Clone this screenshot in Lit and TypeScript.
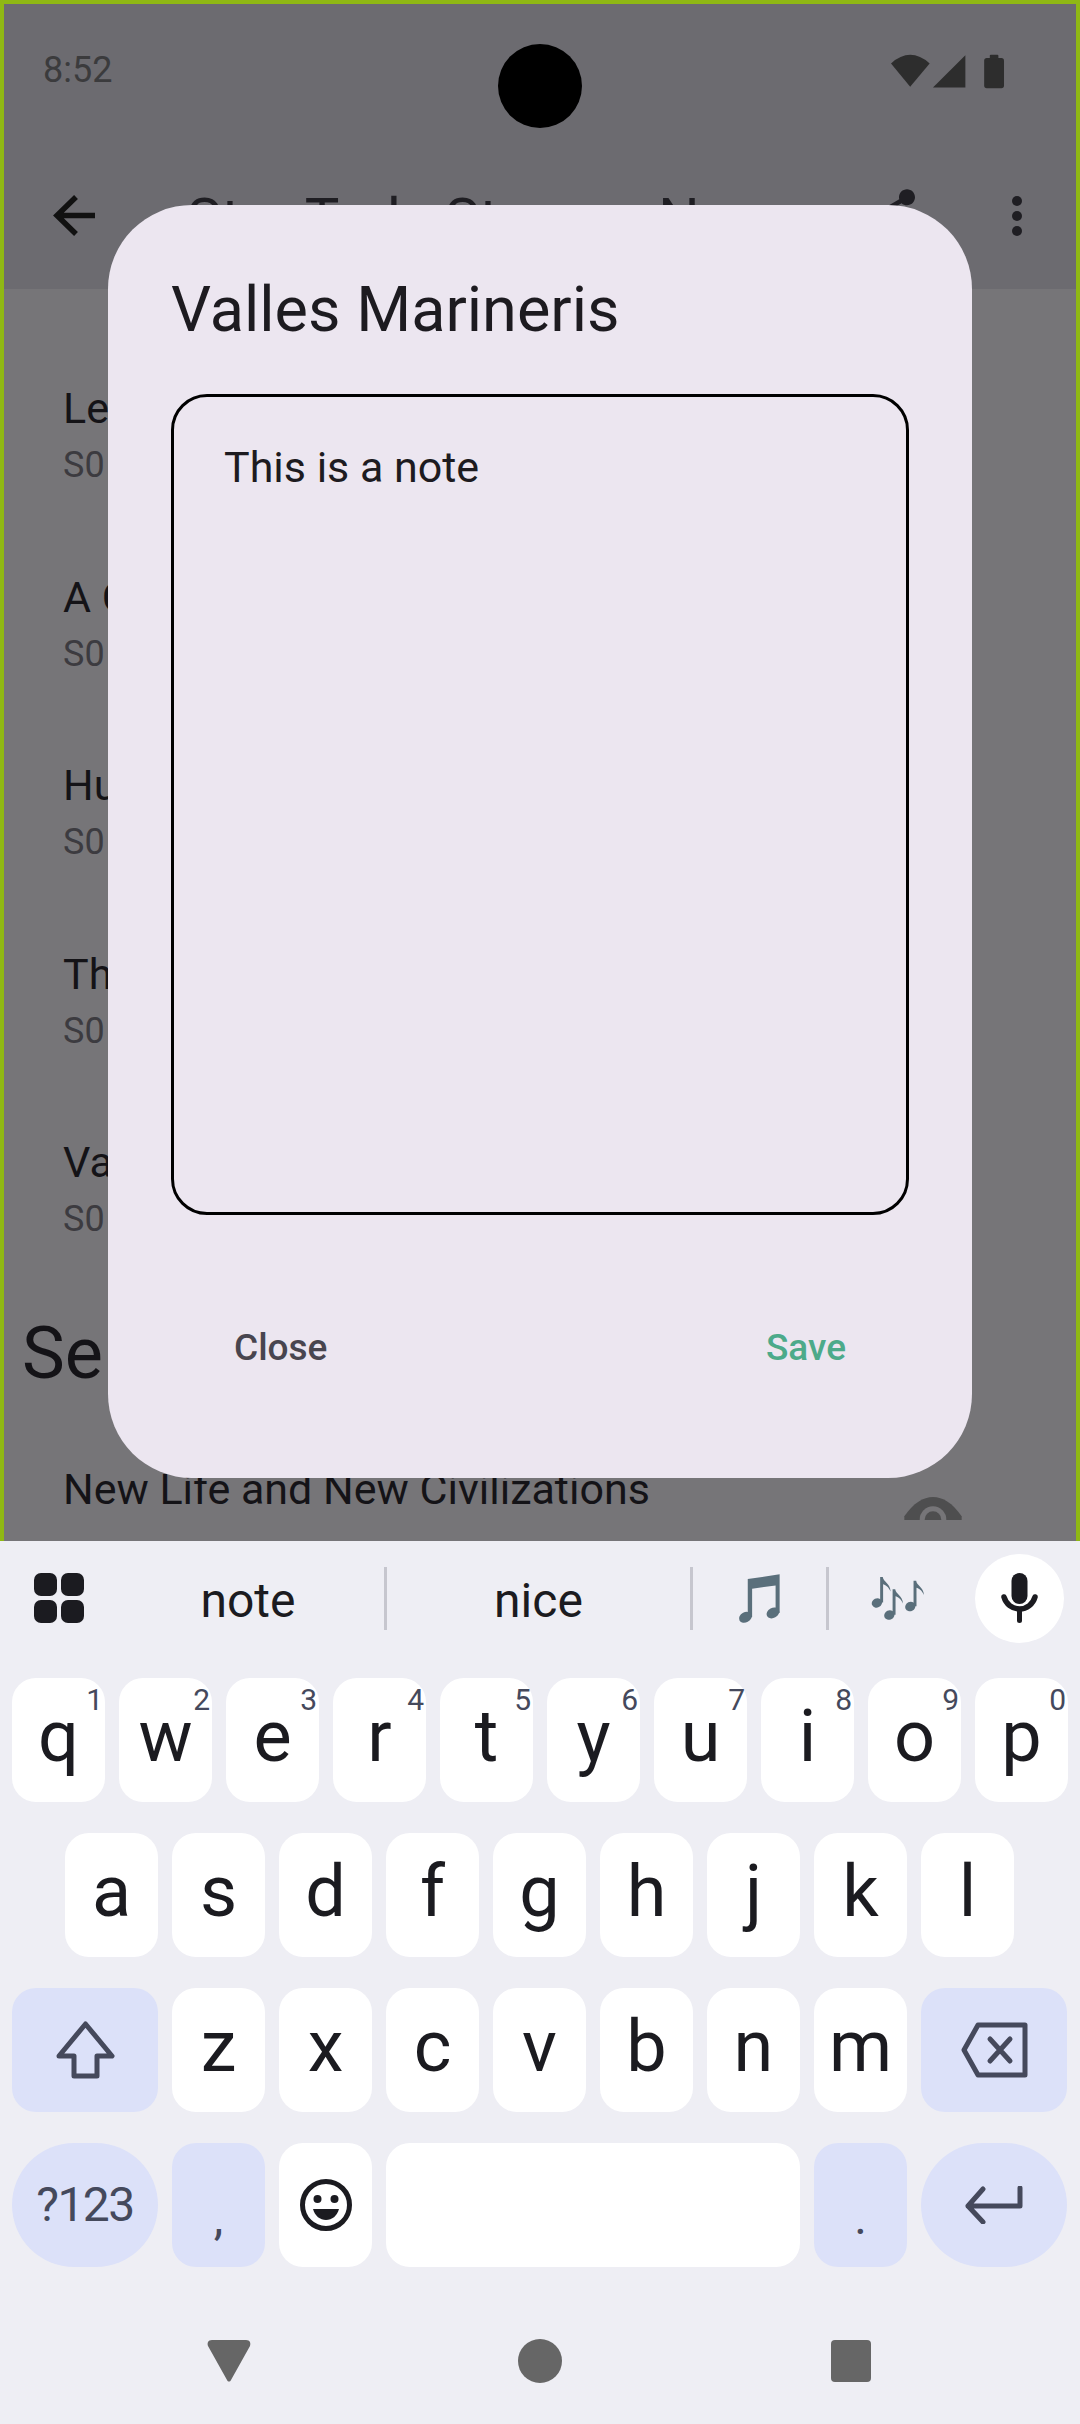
import {LitElement, html, css, svg} from 'lit';
import {customElement} from 'lit/decorators.js';

const ROW_1 = [['q', '1'], ['w', '2'], ['e', '3'], ['r', '4'], ['t', '5'], ['y', '6'], ['u', '7'], ['i', '8'], ['o', '9'], ['p', '0']];
const ROW_2 = ['a', 's', 'd', 'f', 'g', 'h', 'j', 'k', 'l'];
const ROW_3 = ['z', 'x', 'c', 'v', 'b', 'n', 'm'];

/** The on-screen keyboard with its suggestion strip and the navigation bar. */
@customElement('soft-keyboard')
export class SoftKeyboard extends LitElement {
    static override styles = css`
        :host {
            display: block;
            height: 883px;
            background: #eeeef4;
            font-family: Roboto, sans-serif;
            color: #1b1b20;
        }

        .strip {
            display: flex;
            align-items: center;
            height: 114px;
            margin-bottom: 23px;
        }
        .apps {
            width: 110px;
            display: flex;
            padding-left: 34px;
            box-sizing: border-box;
        }
        .word {
            text-align: center;
            font-size: 48px;
            line-height: 56px;
            padding-top: 6px;
        }
        .word.first {
            width: 274px;
            box-sizing: border-box;
            padding-left: 2px;
        }
        .word.second { width: 303px; }
        .divider {
            width: 3px;
            height: 63px;
            background: #c6c6ce;
        }
        .emoji {
            display: flex;
            justify-content: center;
            align-items: center;
        }
        .emoji.one { width: 133px; }
        .emoji.many { width: 138px; }
        .mic {
            width: 89px;
            height: 89px;
            margin-left: 8px;
            border-radius: 50%;
            background: #fff;
            display: flex;
            justify-content: center;
            align-items: center;
        }

        .keys {
            display: flex;
            flex-direction: column;
            gap: 31px;
        }
        .row {
            display: flex;
            gap: 14px;
            padding-left: 12px;
        }
        .row.home-row { padding-left: 65px; }
        .key {
            position: relative;
            width: 93px;
            height: 124px;
            box-sizing: border-box;
            padding-bottom: 7px;
            border-radius: 24px;
            background: #fff;
            display: flex;
            justify-content: center;
            align-items: center;
            font-size: 72px;
            line-height: 84px;
        }
        .key.wide { width: 146px; }
        .key.space { width: 414px; }
        .key.mod {
            background: #dce1f9;
            color: #45495c;
        }
        .key.pill { border-radius: 62px; }
        .key.icon { padding-bottom: 0; }
        .key.symbols {
            font-size: 48px;
            padding-bottom: 0;
            letter-spacing: -1.500px;
        }
        .key.mark {
            font-size: 48px;
            padding: 26px 0 0;
        }
        .hint {
            position: absolute;
            top: 4px;
            right: 2px;
            font-size: 30px;
            line-height: 36px;
            color: #45495c;
        }

        .nav {
            display: flex;
            align-items: center;
            height: 126px;
            padding-top: 31px;
        }
        .nav svg { display: block; }
        .nav .back { margin-left: 207px; }
        .nav .home { margin-left: 267px; }
        .nav .recent { margin-left: 269px; }
    `;

    private _key(label: string, hint?: string) {
        return html`<div class="key">${label}${hint ? html`<span class="hint">${hint}</span>` : ''}</div>`;
    }

    override render() {
        return html`
            <div class="strip">
                <div class="apps">
                    <svg width="50" height="50" viewBox="0 0 50 50" fill="#1b1b20">
                        <rect width="23" height="23" rx="7" />
                        <rect x="27" width="23" height="23" rx="7" />
                        <rect y="27" width="23" height="23" rx="7" />
                        <rect x="27" y="27" width="23" height="23" rx="7" />
                    </svg>
                </div>
                <div class="word first">note</div>
                <div class="divider"></div>
                <div class="word second">nice</div>
                <div class="divider"></div>
                <div class="emoji one">
                    <svg width="47" height="53" viewBox="175 100 130 158" fill="#5a6f7b">
                        <path d="M205 121 L300 107 V222 H288 V140 L218 150 V235 H205 Z" />
                        <ellipse cx="198" cy="235" rx="20" ry="15" transform="rotate(-28 198 235)" />
                        <ellipse cx="280" cy="222" rx="20" ry="15" transform="rotate(-28 280 222)" />
                    </svg>
                </div>
                <div class="divider"></div>
                <div class="emoji many">
                    <svg width="54" height="44" viewBox="570 112 165 132" fill="#5a6f7b">
                        ${[[0, 0], [38, 37], [102, 11]].map(([x, y]) => svg`
                            <g transform="translate(${x} ${y})">
                                <ellipse cx="588" cy="193" rx="16" ry="14" transform="rotate(-25 588 193)" />
                                <path d="M598 114 H606 C608 130 628 132 630 158 C622 142 614 138 607 136 V192 H598 Z" />
                            </g>
                        `)}
                    </svg>
                </div>
                <div class="mic">
                    <svg width="37" height="50" viewBox="0 0 37 50" fill="#1b1b20">
                        <rect x="10.5" width="16" height="31" rx="8" />
                        <path d="M3 24 C5 31 11 36 18.500 36 C26 36 32 31 34 24" fill="none" stroke="#1b1b20" stroke-width="5.500" stroke-linecap="round" />
                        <rect x="16" y="35" width="5" height="15" rx="2.500" />
                    </svg>
                </div>
            </div>

            <div class="keys">
                <div class="row">${ROW_1.map(([k, h]) => this._key(k, h))}</div>
                <div class="row home-row">${ROW_2.map((k) => this._key(k))}</div>
                <div class="row">
                    <div class="key wide mod icon">
                        <svg width="59" height="58" viewBox="0 0 59 58" fill="none" stroke="#45495c" stroke-width="5" stroke-linejoin="round">
                            <path d="M29.500 3 L56 35 H41 V55 H18 V35 H3 Z" />
                        </svg>
                    </div>
                    ${ROW_3.map((k) => this._key(k))}
                    <div class="key wide mod icon">
                        <svg width="67" height="56" viewBox="0 0 67 56" fill="none" stroke="#45495c" stroke-width="5" stroke-linejoin="round">
                            <path d="M17 3 H64 V53 H17 L3 28 Z" />
                            <path d="M29 17 L49 39 M49 17 L29 39" stroke-linecap="round" />
                        </svg>
                    </div>
                </div>
                <div class="row">
                    <div class="key wide mod pill symbols">?123</div>
                    <div class="key mod mark">,</div>
                    <div class="key icon">
                        <svg width="52" height="52" viewBox="0 0 52 52" fill="#1b1b20">
                            <circle cx="26" cy="26" r="23.500" fill="none" stroke="#1b1b20" stroke-width="5" />
                            <circle cx="17.500" cy="20" r="4" />
                            <circle cx="34.500" cy="20" r="4" />
                            <path d="M13 30 H39 C37 37 32 41 26 41 C20 41 15 37 13 30 Z" />
                        </svg>
                    </div>
                    <div class="key space"></div>
                    <div class="key mod mark">.</div>
                    <div class="key wide mod pill icon">
                        <svg width="58" height="38" viewBox="0 0 58 38" fill="none" stroke="#45495c" stroke-width="5" stroke-linecap="round" stroke-linejoin="round">
                            <path d="M55 2 V20 H3 M18 3 L3 20 L18 36" />
                        </svg>
                    </div>
                </div>
            </div>

            <div class="nav">
                <svg class="back" width="44" height="42" viewBox="0 0 44 42" fill="#666">
                    <path d="M5 0 H39 C43 0 44 3 43 6 L24 40 C23 42 21 42 20 40 L1 6 C0 3 1 0 5 0 Z" />
                </svg>
                <svg class="home" width="44" height="44" viewBox="0 0 44 44" fill="#666">
                    <circle cx="22" cy="22" r="22" />
                </svg>
                <svg class="recent" width="40" height="42" viewBox="0 0 40 42" fill="#666">
                    <rect width="40" height="42" rx="4" />
                </svg>
            </div>
        `;
    }
}

@customElement('app-root')
export class AppRoot extends LitElement {
    static override styles = css`
        :host {
            display: block;
            width: 1080px;
            height: 2424px;
            overflow: hidden;
            font-family: Roboto, sans-serif;
        }

        .screen {
            position: relative;
            height: 1541px;
            box-sizing: border-box;
            border: 4px solid #8fb814;
            border-bottom: none;
            background: #767578;
            overflow: hidden;
        }

        .top {
            background: #6c6b70;
            height: 285px;
        }
        .status {
            display: flex;
            align-items: flex-start;
            height: 138px;
            box-sizing: border-box;
            padding: 0 0 0 39px;
        }
        .time {
            font-size: 36px;
            line-height: 42px;
            margin-top: 45px;
            color: #3b3b3d;
        }
        .status svg {
            margin: 50px 0 0 779px;
        }
        .camera {
            position: absolute;
            left: 494px;
            top: 40px;
            width: 84px;
            height: 84px;
            border-radius: 50%;
            background: #000;
        }
        .bar {
            display: flex;
            align-items: center;
            height: 147px;
            padding-left: 49px;
        }
        .title {
            margin-left: 92px;
            width: 672px;
            font-size: 58px;
            line-height: 68px;
            margin-top: 6px;
            color: #1f1e23;
            white-space: nowrap;
        }
        .bar .more { margin-left: 64px; }

        .list {
            padding: 94px 0 0 59px;
        }
        .item {
            height: 188.500px;
        }
        .name {
            font-size: 43px;
            line-height: 50px;
            color: #141317;
        }
        .sub {
            font-size: 36px;
            line-height: 42px;
            margin-top: 11px;
            color: #3c3b40;
        }
        .season {
            margin: -14px 0 0 -41px;
            font-size: 72px;
            line-height: 84px;
            color: #141317;
        }
        .last {
            display: flex;
            justify-content: space-between;
            height: 124px;
            overflow: hidden;
            padding-right: 114px;
        }
        .last .name {
            margin-top: 68px;
            white-space: nowrap;
        }
        .last svg {
            margin-top: 101px;
            flex: none;
        }

        .dialog {
            position: absolute;
            left: 104px;
            top: 201px;
            width: 864px;
            height: 1273px;
            box-sizing: border-box;
            padding: 69px 63px 0;
            border-radius: 84px;
            background: #ece6f0;
            color: #1d1b20;
        }
        .heading {
            font-size: 63px;
            line-height: 72px;
        }
        .note {
            height: 821px;
            box-sizing: border-box;
            margin-top: 48px;
            padding: 45px 50px;
            border: 3px solid #000;
            border-radius: 36px;
            font-size: 43px;
            line-height: 50px;
        }
        .actions {
            display: flex;
            justify-content: space-between;
            padding: 112px 63px 0;
            font-size: 37px;
            line-height: 42px;
            font-weight: 500;
        }
        .close { color: #48454f; }
        .save { color: #4caa8a; }
    `;

    override render() {
        const rows = ['Le', 'A C', 'Hu', 'Th', 'Va'];
        return html`
            <div class="screen">
                <div class="top">
                    <div class="status">
                        <span class="time">8:52</span>
                        <svg width="114" height="35" viewBox="153 100 345 105" fill="#2d2d2d">
                            <path d="M153 128 Q211 76 270 128 L211 199 Z" />
                            <path d="M378 103 V201 H280 Z" />
                            <rect x="435" y="112" width="60" height="91" rx="8" />
                            <rect x="452" y="102" width="26" height="14" rx="3" />
                        </svg>
                    </div>
                    <div class="bar">
                        <svg width="42" height="41" viewBox="0 0 42 41" fill="none" stroke="#111" stroke-width="5.500">
                            <path d="M42 20.500 H4 M23 2 L4 20.500 L23 39" />
                        </svg>
                        <div class="title">Star Trek: Strange New...</div>
                        <svg width="64" height="64" viewBox="0 0 24 24" fill="#1f1e23">
                            <path d="M18 16.080c-.76 0-1.440.3-1.960.77L8.910 12.700c.05-.23.09-.46.09-.7s-.04-.47-.09-.7l7.050-4.110c.54.5 1.250.81 2.040.81 1.660 0 3-1.340 3-3s-1.340-3-3-3-3 1.340-3 3c0 .24.04.47.09.7L8.040 9.810C7.500 9.310 6.790 9 6 9c-1.660 0-3 1.340-3 3s1.340 3 3 3c.79 0 1.500-.31 2.040-.81l7.120 4.160c-.05.21-.08.43-.08.65 0 1.610 1.310 2.920 2.920 2.920s2.920-1.310 2.920-2.920-1.310-2.920-2.920-2.920z" />
                        </svg>
                        <svg class="more" width="60" height="60" viewBox="0 0 24 24" fill="#1f1e23">
                            <circle cx="12" cy="6" r="2" />
                            <circle cx="12" cy="12" r="2" />
                            <circle cx="12" cy="18" r="2" />
                        </svg>
                    </div>
                </div>
                <div class="list">
                    ${rows.map((r) => html`
                        <div class="item">
                            <div class="name">${r}</div>
                            <div class="sub">S0</div>
                        </div>
                    `)}
                    <div class="season">Se</div>
                    <div class="last">
                        <div class="name">New Life and New Civilizations</div>
                        <!-- top half of an eye, the list is cut off just under it -->
                        <svg width="58" height="23" viewBox="133 80 172 69" fill="#4e4e4f">
                            <path d="M133 138 C160 98 190 80 219 80 C248 80 278 98 305 138 V149 H133 Z" />
                            <circle cx="219" cy="148" r="40" fill="#767578" />
                            <circle cx="219" cy="148" r="25" />
                        </svg>
                    </div>
                </div>
                <div class="camera"></div>
                <div class="dialog">
                    <div class="heading">Valles Marineris</div>
                    <div class="note">This is a note</div>
                    <div class="actions">
                        <span class="close">Close</span>
                        <span class="save">Save</span>
                    </div>
                </div>
            </div>
            <soft-keyboard></soft-keyboard>
        `;
    }
}
